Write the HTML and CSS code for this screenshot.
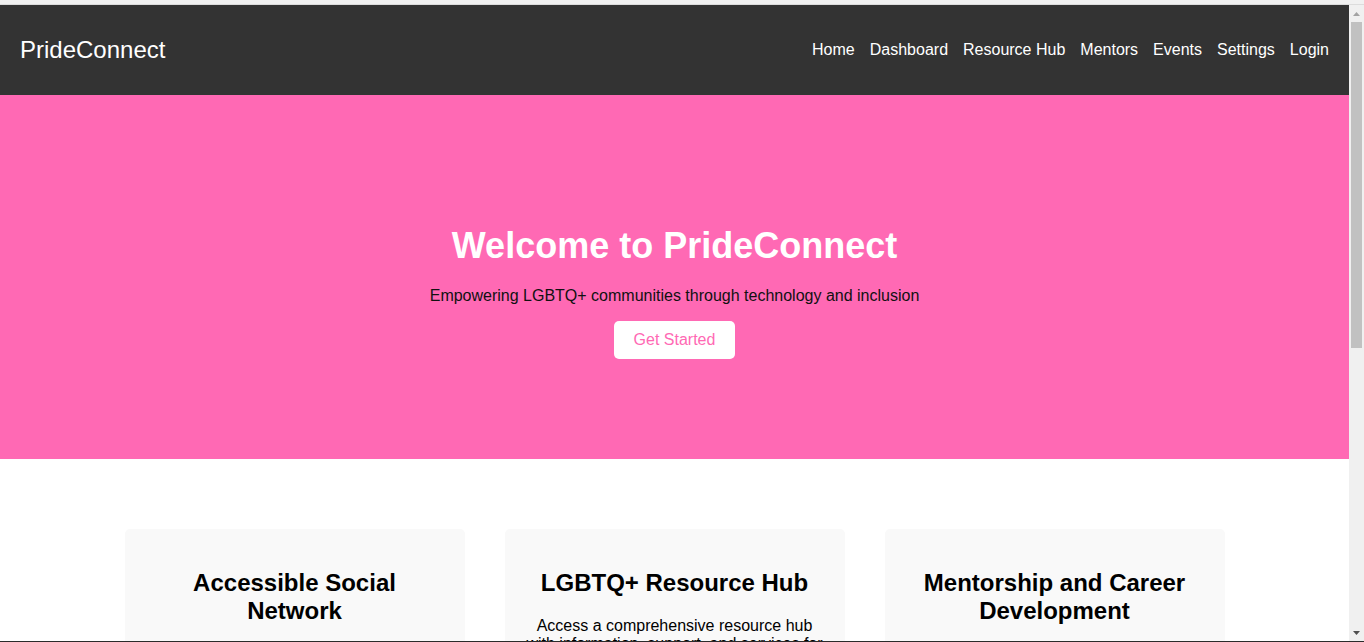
FILE: index.html
```html
<!DOCTYPE html>
<html lang="en">
<head>
<meta charset="utf-8">
<title>PrideConnect</title>
<link rel="stylesheet" href="styles.css">
</head>
<body>
<div class="screen">
  <div class="topbar"></div>
  <div class="viewport">
    <div class="page">
      <header class="site-header">
        <div class="logo">PrideConnect</div>
        <nav class="nav">
          <a href="#">Home</a>
          <a href="#">Dashboard</a>
          <a href="#">Resource Hub</a>
          <a href="#">Mentors</a>
          <a href="#">Events</a>
          <a href="#">Settings</a>
          <a href="#">Login</a>
        </nav>
      </header>
      <section class="hero">
        <h1 class="hero-title">Welcome to PrideConnect</h1>
        <p class="hero-sub">Empowering LGBTQ+ communities through technology and inclusion</p>
        <a class="btn" href="#">Get Started</a>
      </section>
      <section class="features">
        <div class="card">
          <h2>Accessible Social Network</h2>
          <p>Connect with others in a safe, inclusive, and fully accessible social network built for everyone.</p>
        </div>
        <div class="card">
          <h2>LGBTQ+ Resource Hub</h2>
          <p>Access a comprehensive resource hub with information, support, and services for LGBTQ+ individuals.</p>
        </div>
        <div class="card">
          <h2>Mentorship and Career Development</h2>
          <p>Find mentors and career opportunities that help you grow personally and professionally.</p>
        </div>
      </section>
    </div>
    <div class="scrollbar">
      <div class="sb-btn">
        <svg width="7" height="4" viewBox="0 0 7 4"><polygon points="0,4 3.5,0 7,4" fill="#a3a3a3"/></svg>
      </div>
      <div class="sb-track"><div class="sb-thumb"></div></div>
      <div class="sb-btn">
        <svg width="7" height="4" viewBox="0 0 7 4"><polygon points="0,0 7,0 3.5,4" fill="#505050"/></svg>
      </div>
    </div>
  </div>
  <div class="bottombar"></div>
</div>
</body>
</html>
```

FILE: styles.css
```css
* { box-sizing: border-box; }
html, body { margin: 0; padding: 0; }
body {
  font-family: "Liberation Sans", Arial, sans-serif;
  color: #000;
  overflow: hidden;
}
.screen {
  height: 642px;
  display: flex;
  flex-direction: column;
  overflow: hidden;
}
.topbar {
  height: 5px;
  flex: none;
  background: #f1f1f1;
  border-bottom: 1px solid #dcdcdc;
}
.viewport {
  flex: 1;
  display: flex;
  min-height: 0;
}
.page {
  flex: 1;
  overflow: hidden;
  background: #fff;
}
.bottombar {
  height: 1px;
  flex: none;
  background: #2b2b2b;
}
.scrollbar {
  width: 15px;
  flex: none;
  background: #f0f0f0;
  display: flex;
  flex-direction: column;
}
.sb-btn {
  height: 17px;
  flex: none;
  display: flex;
  align-items: center;
  justify-content: center;
}
.sb-btn svg { display: block; }
.sb-track {
  flex: 1;
  padding: 0 2px;
}
.sb-thumb {
  height: 326px;
  background: #c1c1c1;
}

.site-header {
  height: 90px;
  background: #333;
  color: #fff;
  display: flex;
  align-items: center;
  justify-content: space-between;
  padding: 0 20px;
}
.logo {
  font-size: 24px;
}
.nav {
  display: flex;
  gap: 15px;
}
.nav a {
  color: #fff;
  text-decoration: none;
  font-size: 16px;
}

.hero {
  height: 364px;
  background: #ff69b4;
  text-align: center;
  padding: 100px 20px 0;
  display: flex;
  flex-direction: column;
  align-items: center;
}
.hero-title {
  color: #fff;
  font-size: 36px;
  line-height: 41px;
  font-weight: bold;
  margin: 30px 0 21px;
}
.hero-sub {
  font-size: 16px;
  line-height: 18px;
  margin: 0 0 16px;
  color: #111;
}
.btn {
  display: block;
  background: #fff;
  color: #ff69b4;
  text-decoration: none;
  font-size: 16px;
  line-height: 18px;
  padding: 10px 20px;
  border-radius: 5px;
}

.features {
  max-width: 1100px;
  margin: 0 auto;
  padding-top: 70px;
  display: grid;
  grid-template-columns: repeat(3, 1fr);
  gap: 40px;
}
.card {
  background: #f9f9f9;
  border-radius: 5px;
  padding: 20px;
  text-align: center;
  min-height: 250px;
}
.card h2 {
  font-size: 24px;
  margin: 19.92px 0;
}
.card p {
  font-size: 16px;
  margin: 16px 0;
}
```
